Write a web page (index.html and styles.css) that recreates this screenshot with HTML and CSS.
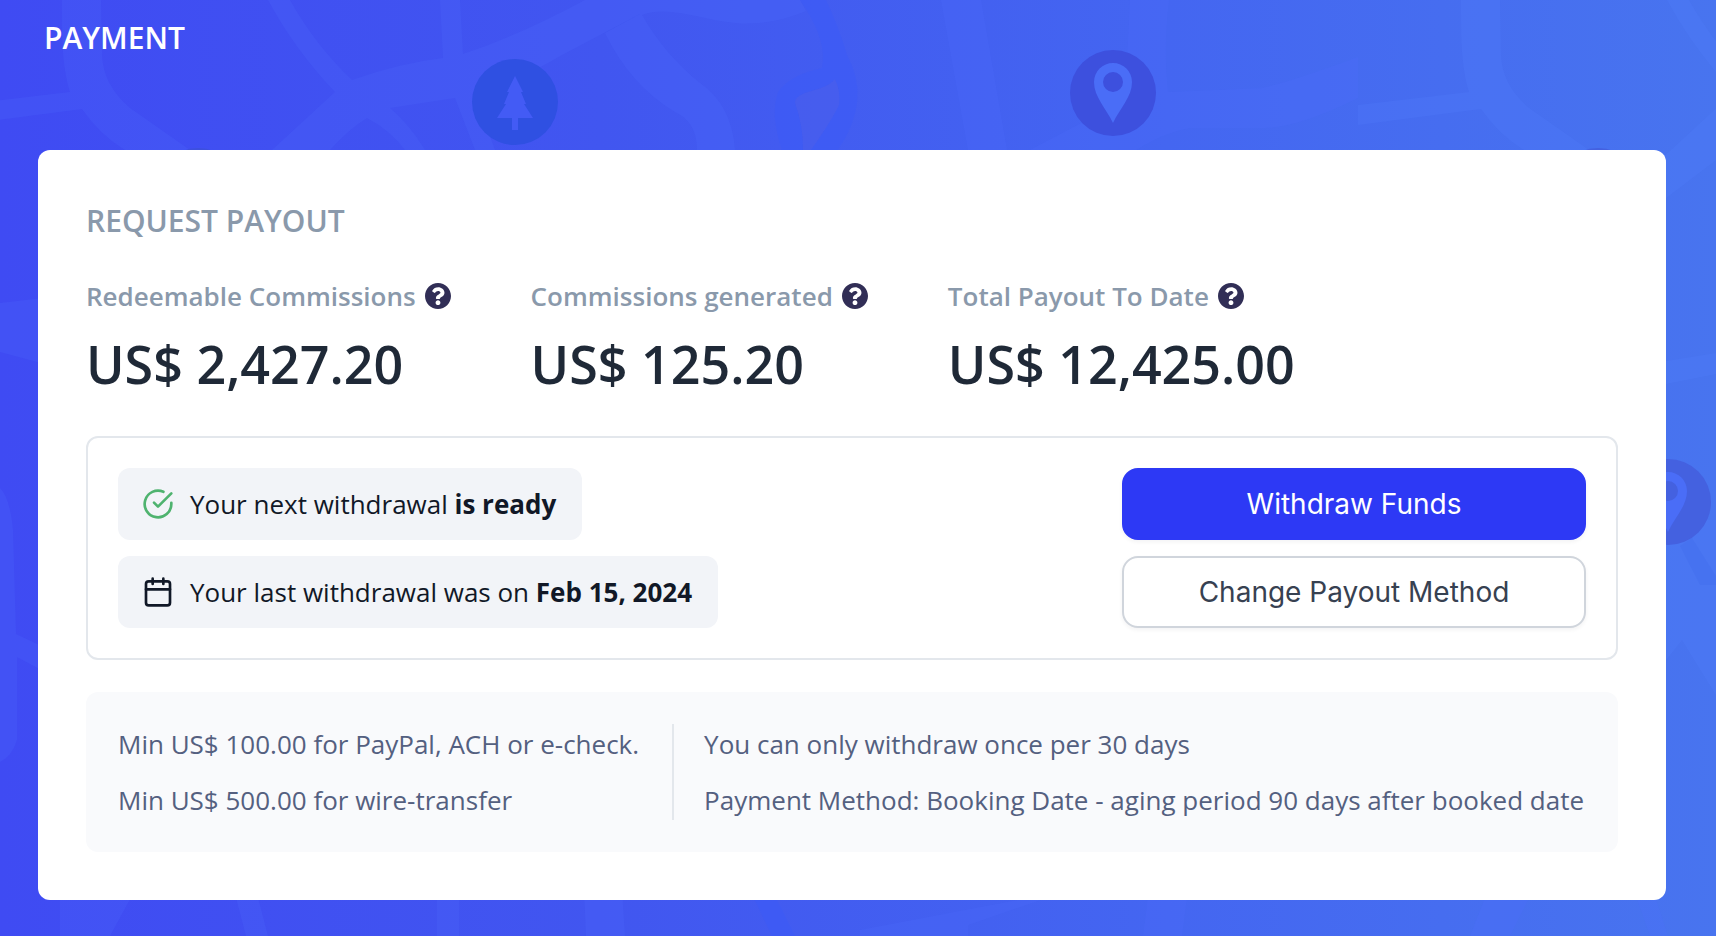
FILE: index.html
```html
<!DOCTYPE html>
<html lang="en">
<head>
<meta charset="utf-8">
<meta name="viewport" content="width=device-width, initial-scale=1">
<title>Payment</title>
<link rel="stylesheet" href="styles.css">
</head>
<body>
<svg class="map" viewBox="0 0 1716 936" preserveAspectRatio="xMidYMid slice" aria-hidden="true">
  <defs>
    <g id="junction" class="road">
      <path d="M62 0C62 40 62 65 70 92L-41 105V125L82 109Q100 135 125 150L170 190H240L190 150L130 108Q103 85 102 55L101 0Z"/>
      <path d="M268 0H290Q315 45 352 80Q400 63 443 58L440 0H460L463 54Q520 35 585 0H640V14L562 55Q520 80 475 95L495 150H475L455 98L390 108Q410 125 425 150H405Q390 130 367 118Q350 128 330 150L262 202L215 232L190 220L272 150L335 92Q295 50 268 0Z"/>
    </g>
  </defs>
  <use href="#junction"/>
  <g class="road">
    <path d="M640 0H800L806 11Q770 26 735 23C700 20 670 5 642 15Q665 55 700 83Q732 105 735 150H697Q697 122 675 112Q630 85 605 33L640 14Z"/>
    <path d="M941 0H981L1007 150H968Z"/>
    <path d="M1130 0H1169Q1163 50 1168 92Q1220 90 1262 88Q1290 82 1358 57V98Q1300 127 1265 128H1190Q1165 132 1136 150H1030L1125 100Z"/>
  </g>
  <path class="river" d="M800 0H826Q840 30 847 55Q872 100 838 150H811Q832 120 839 105Q841 92 835 79C825 92 795 90 795 103Q803 125 803 150H782Q770 115 778 92Q790 75 822 68Q828 40 800 0Z"/>
  <path class="clay" d="M835 79C825 92 795 90 795 103Q803 125 803 150H811Q832 120 839 105Q841 92 835 79Z"/>
  <svg x="1358" width="358" height="936" viewBox="1358 0 358 936">
    <g class="east">
      <use href="#junction" x="1399"/>
      <path class="road" d="M1666 361L1716 353V374L1666 384Z"/>
      <path class="road" d="M1666 520H1716V695L1682 640L1666 660Z"/>
    </g>
    <path class="shade" d="M1680 546L1700 585H1716V576L1692 538Z"/>
  </svg>
  <g class="road">
    <path d="M0 303L60 296V368L0 352Z"/>
    <path d="M0 488Q10 498 13 530L16 634L60 655V680L17 657V740Q12 756 0 762Z"/>
    <path d="M60 890H135L110 936H60ZM234 890H256L268 936H246ZM437 890H459V936H437ZM584 890H622L625 936H586ZM1070 890L860 930V936H968V925ZM1149 890H1188L1182 936H1143ZM1488 890H1533L1510 936H1470ZM1634 890H1653L1668 936H1650Z"/>
  </g>
  <path class="river" d="M750 890H772L795 936H772Z"/>
  <circle class="grove" cx="515" cy="102" r="43"/>
  <path class="glyph-a" d="M515 76L507 92H509L504 104H506L497 118H512V130H518V118H533L524 104H526L521 92H523Z"/>
  <circle class="stop" cx="1113" cy="93" r="43"/>
  <path class="glyph-b" fill-rule="evenodd" d="M1113 63A19 19 0 0 0 1094 82C1094 97 1106 108 1113 123C1120 108 1132 97 1132 82A19 19 0 0 0 1113 63ZM1113 72A10 10 0 1 1 1113 92A10 10 0 0 1 1113 72Z"/>
  <circle class="stop dim" cx="1668" cy="502" r="43"/>
  <path class="glyph-b" fill-rule="evenodd" d="M1668 472A19 19 0 0 0 1649 491C1649 506 1661 517 1668 532C1675 517 1687 506 1687 491A19 19 0 0 0 1668 472ZM1668 481A10 10 0 1 1 1668 501A10 10 0 0 1 1668 481Z"/>
  <circle class="stop" cx="198" cy="191" r="43"/>
  <circle class="stop dim" cx="1598" cy="191" r="43"/>
</svg>

<main class="page">
  <h1 class="page-title">PAYMENT</h1>
  <section class="card" aria-labelledby="payout-title">
    <h2 class="card-title" id="payout-title">REQUEST PAYOUT</h2>

    <dl class="stats">
      <div class="stat">
        <dt class="stat-label">Redeemable Commissions
          <button class="help" type="button" aria-label="About redeemable commissions"><svg viewBox="8 8 496 496"><path d="M504 256c0 136.997-111.043 248-248 248S8 392.997 8 256C8 119.083 119.043 8 256 8s248 111.083 248 248zM262.655 90c-54.497 0-89.255 22.957-116.549 63.758-3.536 5.286-2.353 12.415 2.715 16.258l34.699 26.31c5.205 3.947 12.621 3.008 16.665-2.122 17.864-22.658 30.113-35.797 57.303-35.797 20.429 0 45.698 13.148 45.698 32.958 0 14.976-12.363 22.667-32.534 33.976C247.128 238.528 216 254.941 216 296v4c0 6.627 5.373 12 12 12h56c6.627 0 12-5.373 12-12v-1.333c0-28.462 83.186-29.647 83.186-106.667 0-58.002-60.165-102-116.531-102zM256 338c-25.365 0-46 20.635-46 46 0 25.364 20.635 46 46 46s46-20.636 46-46c0-25.364-20.635-46-46-46z"/></svg></button>
        </dt>
        <dd class="stat-value">US$ 2,427.20</dd>
      </div>
      <div class="stat">
        <dt class="stat-label">Commissions generated
          <button class="help" type="button" aria-label="About commissions generated"><svg viewBox="8 8 496 496"><path d="M504 256c0 136.997-111.043 248-248 248S8 392.997 8 256C8 119.083 119.043 8 256 8s248 111.083 248 248zM262.655 90c-54.497 0-89.255 22.957-116.549 63.758-3.536 5.286-2.353 12.415 2.715 16.258l34.699 26.31c5.205 3.947 12.621 3.008 16.665-2.122 17.864-22.658 30.113-35.797 57.303-35.797 20.429 0 45.698 13.148 45.698 32.958 0 14.976-12.363 22.667-32.534 33.976C247.128 238.528 216 254.941 216 296v4c0 6.627 5.373 12 12 12h56c6.627 0 12-5.373 12-12v-1.333c0-28.462 83.186-29.647 83.186-106.667 0-58.002-60.165-102-116.531-102zM256 338c-25.365 0-46 20.635-46 46 0 25.364 20.635 46 46 46s46-20.636 46-46c0-25.364-20.635-46-46-46z"/></svg></button>
        </dt>
        <dd class="stat-value">US$ 125.20</dd>
      </div>
      <div class="stat">
        <dt class="stat-label">Total Payout To Date
          <button class="help" type="button" aria-label="About total payout to date"><svg viewBox="8 8 496 496"><path d="M504 256c0 136.997-111.043 248-248 248S8 392.997 8 256C8 119.083 119.043 8 256 8s248 111.083 248 248zM262.655 90c-54.497 0-89.255 22.957-116.549 63.758-3.536 5.286-2.353 12.415 2.715 16.258l34.699 26.31c5.205 3.947 12.621 3.008 16.665-2.122 17.864-22.658 30.113-35.797 57.303-35.797 20.429 0 45.698 13.148 45.698 32.958 0 14.976-12.363 22.667-32.534 33.976C247.128 238.528 216 254.941 216 296v4c0 6.627 5.373 12 12 12h56c6.627 0 12-5.373 12-12v-1.333c0-28.462 83.186-29.647 83.186-106.667 0-58.002-60.165-102-116.531-102zM256 338c-25.365 0-46 20.635-46 46 0 25.364 20.635 46 46 46s46-20.636 46-46c0-25.364-20.635-46-46-46z"/></svg></button>
        </dt>
        <dd class="stat-value">US$ 12,425.00</dd>
      </div>
    </dl>

    <div class="withdrawal">
      <div class="chips">
        <p class="chip">
          <svg class="chip-icon ready" viewBox="0 0 24 24" aria-hidden="true"><path d="M22 11.08V12a10 10 0 1 1-5.93-9.14"/><path d="M22 4 12 14.01l-3-3"/></svg>
          <span>Your next withdrawal <strong>is ready</strong></span>
        </p>
        <p class="chip">
          <svg class="chip-icon" viewBox="0 0 24 24" aria-hidden="true"><rect x="3" y="4" width="18" height="18" rx="2"/><path d="M16 2v4M8 2v4M3 10h18"/></svg>
          <span>Your last withdrawal was on <strong>Feb 15, 2024</strong></span>
        </p>
      </div>
      <div class="actions">
        <button class="btn btn-primary" type="button">Withdraw Funds</button>
        <button class="btn btn-outline" type="button">Change Payout Method</button>
      </div>
    </div>

    <div class="notes">
      <div class="notes-col">
        <p>Min US$ 100.00 for PayPal, ACH or e-check.</p>
        <p>Min US$ 500.00 for wire-transfer</p>
      </div>
      <div class="notes-col">
        <p>You can only withdraw once per 30 days</p>
        <p>Payment Method: Booking Date - aging period 90 days after booked date</p>
      </div>
    </div>
  </section>
</main>
</body>
</html>
```
FILE: styles.css
```css
* {
  box-sizing: border-box;
  margin: 0;
  padding: 0;
}

body {
  min-height: 100vh;
  background: linear-gradient(90deg, #3f4bf3 0%, #4156f0 35%, #4466f1 68%, #4874ef 100%);
  font-family: "Open Sans", "Noto Sans", sans-serif;
  font-size: 26px;
  line-height: 40px;
  color: #111827;
}

button {
  font: inherit;
  cursor: pointer;
}

/* Decorative street map behind the page */
.map {
  position: absolute;
  inset: 0;
  width: 100%;
  height: 100%;
}

.road { fill: var(--road, #4f70ff); fill-opacity: 0.2; }
.east { --road: #5583ff; }
.river { fill: #3a5bfa; fill-opacity: 0.4; }
.clay { fill: #5560e8; fill-opacity: 0.25; }
.shade { fill: #4470ee; fill-opacity: 0.6; }
.grove { fill: #2f50e2; }
.stop { fill: #3d50de; }
.dim { fill: #4461e0; }
.glyph-a { fill: #435bf5; }
.glyph-b { fill: #4a6df7; }

.page {
  position: relative;
  padding: 18px 50px 36px 38px;
}

.page-title,
.card-title {
  font-size: 30px;
  font-weight: 600;
  line-height: 40px;
}

.page-title {
  margin-bottom: 92px;
  padding-left: 6px;
  color: #fff;
}

.card {
  padding: 48px;
  border-radius: 12px;
  background: #fff;
}

.card-title {
  margin: 3px 0 35px;
  color: #8a99ab;
}

.stats {
  display: flex;
  flex-wrap: wrap;
  gap: 32px 80px;
  margin-bottom: 40px;
}

.stat-label {
  display: flex;
  align-items: center;
  gap: 9px;
  font-weight: 600;
  color: #8a99ab;
}

.stat-value {
  margin-top: 16px;
  font-size: 52px;
  font-weight: 600;
  line-height: 64px;
  color: #1f2937;
}

.help {
  display: block;
  width: 26px;
  height: 26px;
  border: 0;
  border-radius: 50%;
  background: none;
  color: #312e56;
}

.help svg {
  display: block;
  fill: currentColor;
}

.withdrawal {
  display: flex;
  flex-wrap: wrap;
  justify-content: space-between;
  gap: 16px;
  margin-bottom: 32px;
  padding: 30px;
  border: 2px solid #e3e7ec;
  border-radius: 12px;
}

.chips,
.actions {
  display: flex;
  flex-direction: column;
  gap: 16px;
}

.chips {
  align-items: flex-start;
}

.chip {
  display: flex;
  align-items: center;
  gap: 16px;
  padding: 16px 26px 16px 24px;
  border-radius: 12px;
  background: #f2f4f8;
}

.chip-icon {
  flex: none;
  width: 32px;
  height: 32px;
  fill: none;
  stroke: currentColor;
  stroke-width: 2;
  stroke-linecap: round;
  stroke-linejoin: round;
}

.ready {
  color: #4fb36f;
}

.actions {
  flex: 0 1 464px;
}

.btn {
  padding: 14px;
  border: 2px solid;
  border-radius: 16px;
  font-family: Inter, sans-serif;
  font-size: 28px;
  box-shadow: 0 2px 4px rgba(16, 24, 40, 0.05);
}

.btn-primary {
  border-color: #2d39f5;
  background: #2d39f5;
  color: #fff;
}

.btn-outline {
  border-color: #d0d5dc;
  background: #fff;
  color: #374151;
}

.notes {
  display: flex;
  padding: 32px;
  border-radius: 12px;
  background: #f9fafc;
  color: #546080;
}

.notes-col {
  display: flex;
  flex-direction: column;
  gap: 16px;
}

.notes-col + .notes-col {
  margin-left: 33px;
  padding-left: 30px;
  border-left: 2px solid #e3e7ec;
}
```
